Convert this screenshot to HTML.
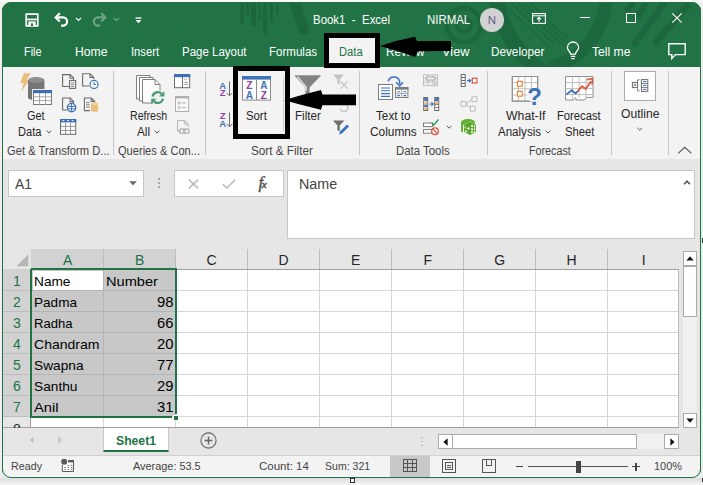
<!DOCTYPE html>
<html lang="en">
<head>
<meta charset="utf-8">
<title>Book1 - Excel</title>
<style>
html,body{margin:0;padding:0}
body{width:703px;height:485px;position:relative;overflow:hidden;background:#eeeeee;font-family:"Liberation Sans",Arial,sans-serif;}
.a{position:absolute}
.t{position:absolute;line-height:20px;height:20px;white-space:nowrap;transform-origin:0 50%}
svg{position:absolute;overflow:visible}
.sep{position:absolute;width:1px;background:#c6c6c6;top:71px;height:84px}
.box{position:absolute;background:#fff;border:1px solid #c6c6c6;box-sizing:border-box}
.sb{position:absolute;background:#fff;border:1px solid #ababab;box-sizing:border-box}
</style>
</head>
<body>
<!-- window -->
<div class="a" style="left:2px;top:2px;width:699px;height:476px;border-radius:9px 9px 9px 9px;overflow:hidden;background:#217346">
  <!-- everything inside is positioned relative to (2,2); use wrapper shifting back -->
  <div class="a" style="left:-2px;top:-2px;width:703px;height:485px">

  <!-- title decorative pattern -->
  <svg style="left:0;top:0" width="703" height="67" viewBox="0 0 703 67">
    <g fill="#1c673d">
      <rect x="240" y="0" width="4" height="24"/><rect x="246" y="0" width="3" height="16"/>
      <rect x="251" y="0" width="5" height="26"/><rect x="258" y="0" width="3" height="20"/>
      <rect x="263" y="0" width="4" height="34"/><rect x="270" y="0" width="3" height="22"/>
      <rect x="276" y="0" width="3" height="14"/>
      <path d="M288 0 L300 0 L310 34 L300 34 Z"/>
    </g>
    <g fill="none" stroke="#1c673d">
      <circle cx="464" cy="25" r="17" stroke-width="4.5"/>
      <circle cx="464" cy="25" r="7" stroke-width="3.5"/>
      <path d="M496 -15 A104 104 0 0 0 600 89" stroke-width="15"/>
      <path d="M606 2 A75 75 0 0 1 549 68" stroke-width="13"/>
      <path d="M506 6 L548 46 M512 4 L554 44 M518 3 L560 43 M524 3 L564 41 M530 3 L568 39" stroke-width="1.2"/>
      <path d="M634 2 L626 12 M647 2 L637 17 M665 2 L633 46 M689 4 L654 44" stroke-width="6.5"/>
    </g>
  </svg>

  <!-- ribbon -->
  <div class="a" style="left:3px;top:67px;width:697px;height:91.5px;background:#f3f3f3"></div>
  <!-- formula area -->
  <div class="a" style="left:3px;top:158.5px;width:697px;height:297px;background:#e6e6e6"></div>
  <!-- status bar -->
  <div class="a" style="left:3px;top:455.5px;width:697px;height:22px;background:#f3f3f3"></div>

  <!-- ===== Data tab highlight ===== -->
  <div class="a" style="left:324px;top:33px;width:55.5px;height:35px;background:#000"></div>
  <div class="a" style="left:329px;top:38px;width:45.5px;height:25px;background:#f3f3f3"></div>

  <!-- ===== Quick access icons ===== -->
  <svg style="left:25px;top:13px" width="14" height="14" viewBox="0 0 14 14">
    <path d="M1.2 1.2 H12.8 V12.8 H1.2 Z" fill="none" stroke="#fff" stroke-width="1.7" stroke-linejoin="round"/>
    <rect x="1.8" y="5.6" width="10.4" height="1.7" fill="#fff"/>
    <rect x="3.3" y="8.4" width="7.4" height="4.6" fill="#fff"/>
    <rect x="5.9" y="10.4" width="2.2" height="2.6" fill="#217346"/>
  </svg>
  <svg style="left:54px;top:12px" width="15" height="15" viewBox="0 0 15 15">
    <path d="M5.8 1.2 L1.6 5.4 L5.8 9.6 M2 5.4 H9 A4.1 4.1 0 0 1 9 13.6 H7" fill="none" stroke="#fff" stroke-width="2.1"/>
  </svg>
  <svg style="left:75px;top:17px" width="7" height="5" viewBox="0 0 7 5"><path d="M1 1 L3.5 3.5 L6 1" fill="none" stroke="#fff" stroke-width="1.1"/></svg>
  <svg style="left:92px;top:12px" width="15" height="15" viewBox="0 0 15 15" opacity="0.35">
    <path d="M9.2 1.2 L13.4 5.4 L9.2 9.6 M13 5.4 H6 A4.1 4.1 0 0 0 6 13.6 H8" fill="none" stroke="#fff" stroke-width="2.1"/>
  </svg>
  <svg style="left:113px;top:17px" width="7" height="5" viewBox="0 0 7 5" opacity="0.35"><path d="M1 1 L3.5 3.5 L6 1" fill="none" stroke="#fff" stroke-width="1.1"/></svg>
  <svg style="left:135px;top:16.5px" width="7" height="7" viewBox="0 0 7 7"><rect x="0.5" y="0.4" width="6" height="1.3" fill="#fff"/><path d="M0.5 3 H6.5 L3.5 6.2 Z" fill="#fff"/></svg>

  <!-- avatar -->
  <div class="a" style="left:480px;top:8px;width:24px;height:24px;border-radius:12px;background:#d2d2d2"></div>

  <!-- window controls -->
  <svg style="left:532px;top:12.5px" width="14" height="11" viewBox="0 0 14 11">
    <rect x="0.6" y="0.6" width="12.8" height="9.8" fill="none" stroke="#fff" stroke-width="1.1"/>
    <path d="M0.6 2.8 H13.4" stroke="#fff" stroke-width="1"/>
    <path d="M7 9 V4.6 M5 6.4 L7 4.4 L9 6.4" fill="none" stroke="#fff" stroke-width="1.1"/>
  </svg>
  <div class="a" style="left:580px;top:17px;width:10px;height:1.3px;background:#fff"></div>
  <div class="a" style="left:626px;top:13px;width:10px;height:10px;border:1.2px solid #fff;box-sizing:border-box"></div>
  <svg style="left:672px;top:13px" width="10" height="10" viewBox="0 0 10 10"><path d="M0.3 0.3 L9.7 9.7 M9.7 0.3 L0.3 9.7" stroke="#fff" stroke-width="1.2"/></svg>

  <!-- lightbulb -->
  <svg style="left:566px;top:42px" width="14" height="18" viewBox="0 0 14 18">
    <path d="M4.6 12.2 C4.6 9.6 1.4 8.6 1.4 5.6 A5.2 5.2 0 0 1 12.6 5.6 C12.6 8.6 9.4 9.6 9.4 12.2 Z" fill="none" stroke="#fff" stroke-width="1.3"/>
    <path d="M4.8 14.4 H9.2 M5.4 16.6 H8.6" stroke="#fff" stroke-width="1.3"/>
  </svg>
  <!-- comment -->
  <svg style="left:668px;top:43px" width="18" height="17" viewBox="0 0 18 17">
    <path d="M0.8 0.8 H17.2 V11.6 H7.4 L3.8 15.4 V11.6 H0.8 Z" fill="none" stroke="#fff" stroke-width="1.4" stroke-linejoin="miter"/>
  </svg>

    <!-- ribbon group separators -->
  <div class="sep" style="left:113px"></div>
  <div class="sep" style="left:205px"></div>
  <div class="sep" style="left:358.5px"></div>
  <div class="sep" style="left:487px"></div>
  <div class="sep" style="left:611px"></div>
  <div class="sep" style="left:668px"></div>
  <!-- Sort highlight box -->
  <div class="a" style="left:233px;top:66.3px;width:56.5px;height:72.4px;box-sizing:border-box;border:5.2px solid #000"></div>
  <div class="a" style="left:282.5px;top:77px;width:1px;height:54px;background:#cfcfcf"></div>
  <!-- outline box -->
  <div class="a" style="left:624px;top:71.4px;width:32px;height:30px;box-sizing:border-box;background:#fff;border:1px solid #ababab"></div>

  <svg style="left:0;top:0" width="703" height="485" viewBox="0 0 703 485">
  <!-- ===== Get Data ===== -->
  <g>
    <path d="M24 73.2 L30.8 73.2 L26.6 80 L29.6 80 L21 91.8 L23.6 83 L20 83 Z" fill="#eabf7c"/>
    <path d="M28 80 V97.5 A8.2 3 0 0 0 44.4 97.5 V80 Z" fill="#757575"/>
    <ellipse cx="36.2" cy="80" rx="8.2" ry="3" fill="#8f8f8f"/>
    <rect x="32.6" y="89.6" width="19.6" height="15.4" fill="#fff" stroke="#f3f3f3" stroke-width="1"/>
    <rect x="33.5" y="90.5" width="18" height="14" fill="#fff" stroke="#7a7a7a" stroke-width="1"/>
    <rect x="33" y="90" width="19" height="3.2" fill="#3b6fb6"/>
    <path d="M33.5 96.8 H51.5 M33.5 100.6 H51.5 M39.5 93 V104.5 M45.5 93 V104.5" stroke="#9a9a9a" stroke-width="0.9" fill="none"/>
  </g>
  <!-- small: from text -->
  <g fill="none" stroke="#6b6b6b" stroke-width="1.1">
    <path d="M69 86.5 H62.6 V74.6 H70.2 L73.6 78 V80"/>
    <path d="M70 74.8 V78.2 H73.4"/>
    <rect x="69.6" y="80.6" width="6" height="7.8" fill="#fff"/>
    <path d="M71 83 H74.4 M71 84.8 H74.4 M71 86.6 H74.4" stroke-width="0.8"/>
  </g>
  <!-- small: recent sources (doc + clock) -->
  <g fill="none" stroke="#6b6b6b" stroke-width="1.1">
    <path d="M89 86 H82.6 V73.8 H90.2 L93.6 77.2 V79"/>
    <path d="M90 74 V77.4 H93.4"/>
    <circle cx="94" cy="84.4" r="4" stroke="#3b6fb6" stroke-width="1.2" fill="#fff"/>
    <path d="M94 82 V84.6 H96.2" stroke="#3b6fb6" stroke-width="1"/>
  </g>
  <!-- small: from web -->
  <g fill="none" stroke="#6b6b6b" stroke-width="1.1">
    <path d="M67 110 H62.6 V98 H70.2 L73.6 101.4 V103"/>
    <path d="M70 98.2 V101.6 H73.4"/>
    <circle cx="71.6" cy="107.6" r="4.2" stroke="#3b6fb6" stroke-width="1.3" fill="#fff"/>
    <path d="M67.6 106.4 H75.6 M67.6 108.9 H75.6 M71.6 103.6 V111.6" stroke="#3b6fb6" stroke-width="1"/>
  </g>
  <!-- small: existing connections -->
  <g fill="none" stroke="#6b6b6b" stroke-width="1.1">
    <path d="M90 110.6 H84.4 V98 H91.4 L94.6 101.2 V103"/>
    <path d="M91.2 98.2 V101.4 H94.4"/>
    <path d="M86.2 102.6 H89.6 M86.2 104.8 H89.6 M86.2 107 H89.6" stroke-width="0.9"/>
    <path d="M91 103.8 V110.2 A3.6 1.6 0 0 0 98.2 110.2 V103.8 Z" fill="#eabf7c" stroke="none"/>
    <ellipse cx="94.6" cy="103.8" rx="3.6" ry="1.6" fill="#f0cf98" stroke="none"/>
  </g>
  <!-- small: from table -->
  <g>
    <rect x="60.5" y="119.5" width="15.2" height="14.8" fill="#fff" stroke="#6b6b6b" stroke-width="1"/>
    <rect x="60" y="119" width="16.2" height="3.4" fill="#3b6fb6"/>
    <path d="M62.4 120.6 H64.4 M67 120.6 H69 M71.6 120.6 H73.6" stroke="#fff" stroke-width="0.9"/>
    <path d="M60.5 126.4 H75.7 M60.5 130.4 H75.7 M65.6 122.4 V134.3 M70.6 122.4 V134.3" stroke="#8a8a8a" stroke-width="0.9" fill="none"/>
  </g>

  <!-- ===== Refresh All ===== -->
  <g fill="#fff" stroke="#7d7d7d" stroke-width="1">
    <path d="M136.5 75.5 H150 V99 H136.5 Z"/>
    <path d="M139.5 77.5 H153 V101 H139.5 Z"/>
    <path d="M142.5 79.5 H155 L160 84.5 V103 H142.5 Z"/>
    <path d="M155 79.7 V84.5 H159.8" fill="none"/>
  </g>
  <circle cx="157.8" cy="97.6" r="7.6" fill="#f3f3f3"/>
  <g fill="none" stroke="#4a9b74" stroke-width="2.3">
    <path d="M152.6 96.6 A5.3 5.3 0 0 1 161.6 93.8"/>
    <path d="M163 98.6 A5.3 5.3 0 0 1 154 101.4"/>
  </g>
  <path d="M164.4 91 V96.4 H159 Z" fill="#4a9b74"/>
  <path d="M151.2 104.2 V98.8 H156.6 Z" fill="#4a9b74"/>
  <!-- small: queries & connections -->
  <g>
    <rect x="174.5" y="74.5" width="15.2" height="13.2" fill="#fff" stroke="#6b6b6b" stroke-width="1"/>
    <rect x="174" y="74" width="16.2" height="3.2" fill="#3b6fb6"/>
    <path d="M182.5 77 V87.5" stroke="#6b6b6b" stroke-width="1"/>
    <path d="M182 79.2 H188.5" stroke="#8a8a8a" stroke-width="0.9" stroke-dasharray="1 1"/>
    <path d="M184.4 82.4 H188 M184.4 84.6 H188" stroke="#8a8a8a" stroke-width="0.9"/>
  </g>
  <!-- small: properties (disabled) -->
  <g fill="none" stroke="#b4adb4" stroke-width="1">
    <rect x="175.5" y="96.5" width="13.2" height="15" fill="#f8f8f8"/>
    <rect x="175" y="96" width="14.2" height="2.4" fill="#b4adb4" stroke="none"/>
    <circle cx="179.2" cy="103" r="1.1"/><circle cx="179.2" cy="107.6" r="1.1"/>
    <path d="M181.8 103 H186 M181.8 107.6 H186"/>
  </g>
  <!-- small: edit links (disabled) -->
  <g fill="none" stroke="#b9b4b9" stroke-width="1">
    <path d="M181 131 H177.5 V120.5 H184.6 L188.2 124 V127"/>
    <path d="M184.4 120.7 V124.2 H188"/>
    <rect x="179.4" y="129" width="5.6" height="4.4" rx="2.2" stroke-width="1.3"/>
    <rect x="183.6" y="129" width="5.6" height="4.4" rx="2.2" stroke-width="1.3"/>
  </g>

  <!-- ===== Sort & Filter ===== -->
  <g font-family="Liberation Sans, Arial, sans-serif" font-weight="bold" font-size="9.5" text-anchor="middle">
    <text x="222.6" y="88.6" fill="#3f74b8">A</text>
    <text x="222.6" y="96.4" fill="#8b44a8">Z</text>
    <text x="222.6" y="119.4" fill="#8b44a8">Z</text>
    <text x="222.6" y="127.2" fill="#3f74b8">A</text>
  </g>
  <g fill="none" stroke="#6b6b6b" stroke-width="1">
    <path d="M229.5 81.5 V95.6 M226.6 92.8 L229.5 95.8 L232.4 92.8"/>
    <path d="M229.5 112.5 V126.6 M226.6 123.8 L229.5 126.8 L232.4 123.8"/>
  </g>
  <!-- big sort icon -->
  <rect x="242.5" y="76.5" width="28" height="23.6" fill="#fff" stroke="#8a8a8a" stroke-width="1"/>
  <rect x="242" y="76" width="29" height="3.6" fill="#3f74b8"/>
  <path d="M256.5 79.6 V100" stroke="#8a8a8a" stroke-width="1"/>
  <g font-family="Liberation Sans, Arial, sans-serif" font-weight="bold" font-size="10" text-anchor="middle">
    <text x="249.4" y="89.4" fill="#8b44a8">Z</text>
    <text x="249.4" y="98.6" fill="#3f74b8">A</text>
    <text x="263.8" y="89.4" fill="#3f74b8">A</text>
    <text x="263.8" y="98.6" fill="#8b44a8">Z</text>
  </g>
  <!-- filter funnel -->
  <path d="M294.2 75.2 H321.2 L309.6 87.6 V101 L305.4 98.6 V87.6 Z" fill="#828282"/>
  <path d="M297.4 76.6 L306.3 87.2 V91" fill="none" stroke="#f3f3f3" stroke-width="1.1"/>
  <!-- clear (disabled) -->
  <path d="M333 74.4 H344 L339.6 79.4 V84.4 L337.4 83.2 V79.4 Z" fill="#c2c2c2"/>
  <path d="M340.6 81.4 L347.6 88.6 M347.6 81.4 L340.6 88.6" stroke="#c2c2c2" stroke-width="1.3"/>
  <!-- reapply (disabled) -->
  <path d="M340 108.4 A4 4 0 1 0 347 105" fill="none" stroke="#c2c2c2" stroke-width="1.4"/>
  <!-- advanced -->
  <path d="M333 120.4 H344.4 L339.8 125.6 V131.6 L337.4 130 V125.6 Z" fill="#6f6f6f"/>
  <path d="M347 124.6 L349 126.6 L342 133.6 L339.2 134.6 L340 131.6 Z" fill="#3b73c4"/>

  <!-- ===== Text to columns ===== -->
  <rect x="378.5" y="84.5" width="14" height="15" fill="#fff" stroke="#7d7d7d" stroke-width="1"/>
  <path d="M381 88 H390 M381 90.8 H390 M381 93.6 H390 M381 96.4 H390" stroke="#3b73c4" stroke-width="1.1"/>
  <rect x="395.5" y="87.5" width="12.4" height="10" fill="#fff" stroke="#7d7d7d" stroke-width="1"/>
  <rect x="395" y="87" width="13.4" height="2.6" fill="#7d7d7d"/>
  <path d="M401.7 89.6 V97.5 M395.5 93.6 H408" stroke="#9a9a9a" stroke-width="0.9"/>
  <path d="M397.2 91.7 H400 M403.4 91.7 H406.2 M397.2 95.6 H400 M403.4 95.6 H406.2" stroke="#3b73c4" stroke-width="1.1"/>
  <path d="M388.2 81.4 A6 6 0 0 1 399.6 81 V84" fill="none" stroke="#3b73c4" stroke-width="1.5"/>
  <path d="M396.2 82.2 L399.6 85.8 L403 82.2" fill="none" stroke="#3b73c4" stroke-width="1.5"/>
  <!-- flash fill (disabled) -->
  <g fill="none" stroke="#c4bfc4" stroke-width="1">
    <rect x="423.5" y="74.8" width="14" height="10.8"/>
    <path d="M423.5 78.4 H437.5 M423.5 82 H437.5 M428 74.8 V85.6 M433 74.8 V85.6"/>
    <rect x="426.4" y="77" width="8.6" height="3" stroke="#aaa4aa" fill="#f3f3f3"/>
    <path d="M436.4 80.6 L432.4 85 H434.8 L433 88.4 L438 83.4 H435.6 L437.6 80.6 Z" fill="#cfcfcf" stroke="none"/>
  </g>
  <!-- remove duplicates -->
  <g stroke="#6b6b6b" stroke-width="1">
    <rect x="423.7" y="97.5" width="4" height="13" fill="#fff"/>
    <rect x="434.7" y="97.5" width="4" height="13" fill="#fff"/>
  </g>
  <rect x="424.2" y="98" width="3" height="3" fill="#3b73c4"/>
  <rect x="424.2" y="101.4" width="3" height="2.8" fill="#eabf7c"/>
  <rect x="424.2" y="104.6" width="3" height="2.6" fill="#3b73c4"/>
  <rect x="424.2" y="107.4" width="3" height="2.6" fill="#eabf7c"/>
  <rect x="435.2" y="98" width="3" height="3" fill="#3b73c4"/>
  <rect x="435.2" y="101.4" width="3" height="2.8" fill="#eabf7c"/>
  <path d="M435 104.4 H438.5 M435 107.4 H438.5" stroke="#6b6b6b" stroke-width="0.9"/>
  <path d="M429.4 104 H433 M431.4 102.2 L433.2 104 L431.4 105.8" fill="none" stroke="#3b73c4" stroke-width="1.1"/>
  <!-- data validation -->
  <g fill="#fff" stroke="#7d7d7d" stroke-width="1">
    <rect x="423.5" y="123" width="9" height="3.6"/>
    <rect x="423.5" y="129.6" width="9" height="3.6"/>
  </g>
  <path d="M431.6 122.6 L433.8 125 L438.4 119.6" fill="none" stroke="#3f9b63" stroke-width="1.5"/>
  <circle cx="435" cy="131.2" r="3.3" fill="#fff" stroke="#d9533a" stroke-width="1.3"/>
  <path d="M432.8 129 L437.2 133.4" stroke="#d9533a" stroke-width="1.2"/>
  <path d="M446.8 125.8 L449.2 128.2 L451.6 125.8" fill="none" stroke="#555" stroke-width="1"/>
  <!-- consolidate -->
  <g fill="#fff" stroke="#6b6b6b" stroke-width="1">
    <rect x="461.2" y="74.5" width="4" height="12"/>
    <path d="M461.2 77.5 H465.2 M461.2 80.5 H465.2 M461.2 83.5 H465.2"/>
  </g>
  <path d="M467 80.6 H470.6 M469 78.8 L470.8 80.6 L469 82.4" fill="none" stroke="#3b73c4" stroke-width="1.1"/>
  <rect x="472.3" y="78.2" width="4.6" height="4.8" fill="#fff" stroke="#d9533a" stroke-width="1.2"/>
  <!-- relationships (disabled) -->
  <g fill="#f6f6f6" stroke="#bdb8bd" stroke-width="1">
    <path d="M466 103.8 L472 99.4 M466 103.8 L470.4 108.6" fill="none"/>
    <rect x="461.2" y="101.4" width="4.8" height="4.8"/>
    <rect x="472" y="96.8" width="4.8" height="4.8"/>
    <rect x="470.4" y="106.2" width="4.8" height="4.8"/>
  </g>
  <!-- data model (green) -->
  <path d="M461 122.6 C461 120.2 464.6 119 468 119 C471.6 119 475 120.2 475 122.6 V124 L470 121.6 L463 125 V132.6 C461.8 132.2 461 131.6 461 130.6 Z" fill="#62b12f"/>
  <path d="M464 124.8 L470 121.8 L476 124.8 V132 L470 135 L464 132 Z" fill="#5aa82b"/>
  <g fill="#fff">
    <rect x="471.2" y="124.8" width="1.6" height="2.2"/><rect x="473.8" y="125.4" width="1.3" height="2"/>
    <rect x="471.2" y="128.2" width="1.6" height="2"/><rect x="473.8" y="128.4" width="1.3" height="1.8"/>
    <rect x="471.2" y="131.2" width="1.6" height="1.8"/><rect x="473.8" y="131" width="1.3" height="1.6"/>
  </g>
  <path d="M468.4 127 V130 M467 128.5 H469.8 M466 130.2 V132.6 M464.8 131.4 H467.2 M465.2 126 V128.4" stroke="#fff" stroke-width="0.8" fill="none"/>
  <!-- ===== What-If ===== -->
  <g fill="#fff" stroke="#8f8f8f" stroke-width="1">
    <rect x="512.3" y="76.5" width="25.4" height="24.6"/>
    <path d="M512.3 82.6 H537.7 M512.3 88.8 H537.7 M512.3 95 H537.7 M518.6 76.5 V101 M525 76.5 V101 M531.4 76.5 V101" stroke="#bdbdbd" fill="none"/>
    <rect x="512.3" y="76.5" width="25.4" height="24.6" fill="none"/>
  </g>
  <rect x="517.4" y="81.4" width="4.8" height="4.8" fill="#fff" stroke="#e8873a" stroke-width="1.2"/>
  <rect x="517.4" y="91.4" width="4.8" height="4.8" fill="#fff" stroke="#e8873a" stroke-width="1.2"/>
  <circle cx="534.4" cy="95.5" r="7.2" fill="#f3f3f3"/>
  <text x="534.6" y="104.6" font-family="Liberation Sans, Arial, sans-serif" font-weight="bold" font-size="24" text-anchor="middle" fill="#3b73b8">?</text>

  <!-- ===== Forecast sheet ===== -->
  <path d="M565.5 76.5 H593 V97.4 H586.4 L584.6 100 H576.6 L575.4 97.6 L574 100 H565.5 Z" fill="#fff" stroke="#8f8f8f" stroke-width="1"/>
  <path d="M565.5 82.6 H593 M565.5 88.6 H593 M565.5 94.6 H593 M572.4 76.5 V100 M579.2 76.5 V97.5 M586 76.5 V97.5" stroke="#bdbdbd" stroke-width="1" fill="none"/>
  <path d="M566.4 94.6 L571.6 90.2 L575.6 93.4 L578 90.8" fill="none" stroke="#3b73b8" stroke-width="1.8"/>
  <path d="M577.6 91.2 L582 86.2 L585.6 89 L591 81.4" fill="none" stroke="#d9593a" stroke-width="1.8"/>
  <path d="M586.8 79.6 L592.4 78.8 L592 84.6" fill="none" stroke="#d9593a" stroke-width="1.6"/>

  <!-- ===== Outline icon ===== -->
  <g fill="none" stroke="#6b6b6b" stroke-width="1">
    <rect x="632.4" y="82.4" width="5.2" height="5.2" fill="#fff"/>
    <path d="M633.6 85 H636.4 M635 83.6 V86.4" stroke-width="0.9"/>
    <path d="M639.6 79.8 H637.6 V82 M637.6 88.4 V90.8 H639.6" stroke-width="0.9"/>
    <rect x="641.4" y="79.6" width="6.4" height="11.8" fill="#fff"/>
    <path d="M641.4 83.4 H647.8 M641.4 87.4 H647.8" stroke-width="0.9"/>
    <path d="M643 81.6 H646.4 M643 85.4 H646.4 M643 89.4 H646.4" stroke="#3b73c4" stroke-width="1"/>
  </g>

  <!-- chevrons -->
  <g fill="none" stroke="#555" stroke-width="1">
    <path d="M46.6 130.6 L49 133 L51.4 130.6"/>
    <path d="M154.6 130.6 L157 133 L159.4 130.6"/>
    <path d="M545.6 130.6 L548 133 L550.4 130.6"/>
    <path d="M637.4 127.8 L639.8 130.2 L642.2 127.8"/>
    <path d="M678.2 153.4 L684.8 147.2 L691.4 153.4" stroke-width="1.2"/>
  </g>
  </svg>


  <!-- ===== formula bar ===== -->
  <div class="box" style="left:8px;top:170px;width:136px;height:27px"></div>
  <svg style="left:129px;top:181px" width="8" height="5" viewBox="0 0 8 5"><path d="M0.2 0.3 H7.8 L4 4.6 Z" fill="#6a6a6a"/></svg>
  <div class="a" style="left:158px;top:178px;width:2px;height:2px;background:#a6a6a6;box-shadow:0 4px 0 #a6a6a6,0 8px 0 #a6a6a6"></div>
  <div class="box" style="left:174px;top:170px;width:110px;height:27px"></div>
  <svg style="left:187.5px;top:178.5px" width="11" height="10" viewBox="0 0 11 10"><path d="M0.8 0.6 L10.2 9.4 M10.2 0.6 L0.8 9.4" stroke="#bcbcbc" stroke-width="1.5"/></svg>
  <svg style="left:221.5px;top:178.5px" width="14" height="10" viewBox="0 0 14 10"><path d="M0.8 5.4 L4.8 9 L13.2 0.8" fill="none" stroke="#bcbcbc" stroke-width="1.6"/></svg>
  <span class="t" style="left:258.5px;top:172.5px;font-family:'Liberation Serif',serif;font-style:italic;font-size:17px;color:#4a4a4a;-webkit-text-stroke:0.35px #4a4a4a;letter-spacing:-1.5px">f<span style="font-size:11px">x</span></span>
  <div class="box" style="left:287px;top:170px;width:408px;height:69px"></div>
  <svg style="left:683px;top:179.5px" width="8" height="5" viewBox="0 0 8 5"><path d="M1 4.2 L4 1.2 L7 4.2" fill="none" stroke="#555" stroke-width="1.6"/></svg>

  <!-- ===== grid ===== -->
  <!-- column headers -->
  <div class="a" style="left:31px;top:249px;width:144.5px;height:20px;background:#d2d2d2"></div>
  <div class="a" style="left:3px;top:269px;width:28px;height:148px;background:#d2d2d2"></div>
  <!-- select-all triangle -->
  <svg style="left:15.5px;top:253.5px" width="12.5" height="12.5" viewBox="0 0 12.5 12.5"><path d="M12.3 0.3 V12.3 H0.3 Z" fill="#b7b7b7"/></svg>
  <!-- white grid -->
  <div class="a" style="left:31px;top:269px;width:648px;height:158.5px;background:#fff"></div>
  <!-- selection fill -->
  <div class="a" style="left:31px;top:269px;width:144.5px;height:148px;background:#c8c8c8"></div>
  <div class="a" style="left:33px;top:271px;width:70px;height:19px;background:#fff"></div>
  <!-- grid lines -->
  <svg style="left:0;top:0" width="703" height="485" viewBox="0 0 703 485" shape-rendering="crispEdges">
    <g stroke="#d6d6d6" stroke-width="1">
      <path d="M31 290.5 H679 M31 311.5 H679 M31 332.5 H679 M31 353.5 H679 M31 374.5 H679 M31 395.5 H679 M31 416.5 H679"/>
      <path d="M103.5 269 V427.5 M175.5 269 V427.5 M247.5 269 V427.5 M319.5 269 V427.5 M391.5 269 V427.5 M463.5 269 V427.5 M535.5 269 V427.5 M607.5 269 V427.5"/>
    </g>
    <!-- darker lines inside selection -->
    <g stroke="#b4b4b4" stroke-width="1">
      <path d="M31 290.5 H175 M31 311.5 H175 M31 332.5 H175 M31 353.5 H175 M31 374.5 H175 M31 395.5 H175"/>
      <path d="M103.5 269 V417"/>
    </g>
    <!-- header separators -->
    <g stroke="#bdbdbd" stroke-width="1">
      <path d="M103.5 249 V269 M175.5 249 V269 M247.5 249 V269 M319.5 249 V269 M391.5 249 V269 M463.5 249 V269 M535.5 249 V269 M607.5 249 V269 M678.5 269 V427.5"/>
      <path d="M3 290.5 H31 M3 311.5 H31 M3 332.5 H31 M3 353.5 H31 M3 374.5 H31 M3 395.5 H31 M3 416.5 H31"/>
    </g>
    <g stroke="#9f9f9f" stroke-width="1">
      <path d="M175 269.5 H679 M30.5 417 V427.5 M3 427.5 H679"/>
    </g>
    <!-- selection border -->
    <g fill="none" stroke="#217346" stroke-width="2">
      <path d="M31 269 H176 V414 M172 417 H31 V269"/>
    </g>
    <rect x="173" y="415" width="5" height="5" fill="#217346" stroke="#fff" stroke-width="1"/>
  </svg>

  <!-- vertical scrollbar -->
  <div class="a" style="left:683px;top:266px;width:13.5px;height:147px;background:#f0f0f0"></div>
  <div class="sb" style="left:683px;top:251px;width:13.5px;height:14.5px"></div>
  <svg style="left:686px;top:256px" width="8" height="5" viewBox="0 0 8 5"><path d="M4 0.3 L7.7 4.5 H0.3 Z" fill="#111"/></svg>
  <div class="sb" style="left:683px;top:266px;width:13.5px;height:51px"></div>
  <div class="sb" style="left:683px;top:413px;width:13.5px;height:14.5px"></div>
  <svg style="left:686px;top:418px" width="8" height="5" viewBox="0 0 8 5"><path d="M4 4.7 L7.7 0.5 H0.3 Z" fill="#111"/></svg>

  <span class="t" style="left:13.1px;top:418.5px;font-size:14px;color:#262626">8</span>
  <div class="a" style="left:3px;top:428px;width:697px;height:27.5px;background:#e6e6e6"></div>
  <!-- sheet tab bar -->
  <svg style="left:29px;top:436px" width="5" height="8" viewBox="0 0 5 8"><path d="M4.6 0.4 V7.6 L0.6 4 Z" fill="#c3c3c3"/></svg>
  <svg style="left:58px;top:436px" width="5" height="8" viewBox="0 0 5 8"><path d="M0.4 0.4 V7.6 L4.4 4 Z" fill="#c3c3c3"/></svg>
  <div class="a" style="left:103px;top:428px;width:63.5px;height:21.5px;background:#fff;border-left:1px solid #c9c9c9;border-right:1px solid #c9c9c9;border-bottom:2px solid #217346"></div>
  <svg style="left:199.5px;top:431.5px" width="17" height="17" viewBox="0 0 17 17"><circle cx="8.5" cy="8.5" r="7.6" fill="none" stroke="#666" stroke-width="1.1"/><path d="M8.5 4.6 V12.4 M4.6 8.5 H12.4" stroke="#666" stroke-width="1.4"/></svg>
  <div class="a" style="left:421px;top:436.5px;width:1.6px;height:1.6px;background:#b5b5b5;box-shadow:0 4px 0 #b5b5b5,0 8px 0 #b5b5b5"></div>
  <!-- horizontal scrollbar -->
  <div class="a" style="left:453px;top:434px;width:211px;height:15px;background:#f0f0f0"></div>
  <div class="sb" style="left:438px;top:434px;width:15px;height:15px"></div>
  <svg style="left:443px;top:437.5px" width="5" height="8" viewBox="0 0 5 8"><path d="M4.6 0.2 V7.8 L0.4 4 Z" fill="#111"/></svg>
  <div class="sb" style="left:452px;top:434px;width:184.5px;height:15px"></div>
  <div class="sb" style="left:664px;top:434px;width:15px;height:15px"></div>
  <svg style="left:669.5px;top:437.5px" width="5" height="8" viewBox="0 0 5 8"><path d="M0.4 0.2 V7.8 L4.6 4 Z" fill="#111"/></svg>

  <!-- status bar -->
  <div class="a" style="left:3px;top:455px;width:697px;height:1px;background:#d2d2d2"></div>
  <div class="a" style="left:3px;top:476px;width:697px;height:1px;background:#fafafa"></div>
  <svg style="left:61px;top:458px" width="14" height="15" viewBox="0 0 14 15">
    <path d="M1.3 7 V13.5 H12.5 V2.6 H7" fill="#fff" stroke="#5a5a5a" stroke-width="1"/>
    <rect x="7" y="2" width="6" height="2.4" fill="#5a5a5a"/>
    <circle cx="3.2" cy="3.8" r="3" fill="#5a5a5a"/>
    <path d="M6.6 7.4 H8.2 M9.8 7.4 H11.4 M3.4 9.4 H5 M6.6 9.4 H8.2 M9.8 9.4 H11.4 M3.4 11.4 H5 M6.6 11.4 H8.2 M9.8 11.4 H11.4" stroke="#5a5a5a" stroke-width="0.9"/>
  </svg>
  <div class="a" style="left:389.5px;top:455.5px;width:40px;height:22px;background:#c8c8c8"></div>
  <svg style="left:403px;top:459px" width="14" height="13" viewBox="0 0 14 13" shape-rendering="crispEdges"><path d="M0.5 0.5 H13.5 V12.5 H0.5 Z M0.5 4.5 H13.5 M0.5 8.5 H13.5 M4.5 0.5 V12.5 M9.5 0.5 V12.5" fill="none" stroke="#555" stroke-width="1"/></svg>
  <svg style="left:442px;top:459px" width="14" height="14" viewBox="0 0 14 14" shape-rendering="crispEdges"><rect x="0.5" y="0.5" width="13" height="13" fill="none" stroke="#555"/><rect x="3.5" y="3.5" width="7" height="7" fill="none" stroke="#555"/><path d="M5 6.5 H9 M5 8.5 H9" stroke="#555"/></svg>
  <svg style="left:482px;top:458.5px" width="14" height="14" viewBox="0 0 14 14" shape-rendering="crispEdges"><rect x="0.5" y="0.5" width="13" height="13" fill="none" stroke="#555"/><path d="M4.5 0.5 V6.5 H9.5 V0.5" fill="none" stroke="#555"/></svg>
  <div class="a" style="left:516px;top:466px;width:7px;height:1.2px;background:#444"></div>
  <div class="a" style="left:528px;top:466.2px;width:100px;height:1px;background:#555"></div>
  <div class="a" style="left:576px;top:460.5px;width:4.5px;height:12px;background:#444"></div>
  <div class="a" style="left:632px;top:466px;width:8px;height:1.2px;background:#444"></div>
  <div class="a" style="left:635.4px;top:462.5px;width:1.2px;height:8px;background:#444"></div>


<span class="t"  style="left:313.0px;top:10.0px;font-size:12px;color:#ffffff;transform:scaleX(0.954);white-space:pre;">Book1  -  Excel</span>
<span class="t"  style="left:427.4px;top:10.0px;font-size:12px;color:#ffffff;transform:scaleX(0.953);">NIRMAL</span>
<span class="t"  style="left:487.8px;top:10.0px;font-size:11.5px;color:#675d84;transform:scaleX(1.000);">N</span>
<span class="t"  style="left:23.5px;top:41.5px;font-size:12px;color:#ffffff;transform:scaleX(0.905);">File</span>
<span class="t"  style="left:74.5px;top:41.5px;font-size:12px;color:#ffffff;transform:scaleX(1.015);">Home</span>
<span class="t"  style="left:130.6px;top:41.5px;font-size:12px;color:#ffffff;transform:scaleX(0.936);">Insert</span>
<span class="t"  style="left:181.5px;top:41.5px;font-size:12px;color:#ffffff;transform:scaleX(0.957);">Page Layout</span>
<span class="t"  style="left:268.6px;top:41.5px;font-size:12px;color:#ffffff;transform:scaleX(0.962);">Formulas</span>
<span class="t"  style="left:339.3px;top:41.5px;font-size:12px;color:#217346;transform:scaleX(0.931);">Data</span>
<span class="t"  style="left:386.0px;top:41.5px;font-size:12px;color:#ffffff;transform:scaleX(0.978);">Review</span>
<span class="t"  style="left:441.5px;top:41.5px;font-size:12px;color:#ffffff;transform:scaleX(1.066);">View</span>
<span class="t"  style="left:491.0px;top:41.5px;font-size:12px;color:#ffffff;transform:scaleX(0.978);">Developer</span>
<span class="t"  style="left:592.0px;top:41.5px;font-size:12px;color:#ffffff;transform:scaleX(1.013);">Tell me</span>
<span class="t"  style="left:27.4px;top:105.6px;font-size:12px;color:#262626;transform:scaleX(0.910);">Get</span>
<span class="t"  style="left:18.4px;top:122.0px;font-size:12px;color:#262626;transform:scaleX(0.923);">Data</span>
<span class="t"  style="left:6.7px;top:141.0px;font-size:12px;color:#444444;transform:scaleX(0.933);">Get & Transform D...</span>
<span class="t"  style="left:129.8px;top:105.6px;font-size:12px;color:#262626;transform:scaleX(0.885);">Refresh</span>
<span class="t"  style="left:136.5px;top:122.0px;font-size:12px;color:#262626;transform:scaleX(0.974);">All</span>
<span class="t"  style="left:117.7px;top:141.0px;font-size:12px;color:#444444;transform:scaleX(0.924);">Queries & Con...</span>
<span class="t"  style="left:246.0px;top:105.6px;font-size:12px;color:#262626;transform:scaleX(0.945);">Sort</span>
<span class="t"  style="left:295.2px;top:105.6px;font-size:12px;color:#262626;transform:scaleX(0.967);">Filter</span>
<span class="t"  style="left:250.7px;top:141.0px;font-size:12px;color:#444444;transform:scaleX(0.977);">Sort & Filter</span>
<span class="t"  style="left:376.0px;top:105.6px;font-size:12px;color:#262626;transform:scaleX(0.979);">Text to</span>
<span class="t"  style="left:369.8px;top:122.0px;font-size:12px;color:#262626;transform:scaleX(0.988);">Columns</span>
<span class="t"  style="left:396.0px;top:141.0px;font-size:12px;color:#444444;transform:scaleX(0.951);">Data Tools</span>
<span class="t"  style="left:505.5px;top:105.6px;font-size:12px;color:#262626;transform:scaleX(1.021);">What-If</span>
<span class="t"  style="left:498.0px;top:122.0px;font-size:12px;color:#262626;transform:scaleX(0.962);">Analysis</span>
<span class="t"  style="left:557.3px;top:105.6px;font-size:12px;color:#262626;transform:scaleX(0.936);">Forecast</span>
<span class="t"  style="left:565.0px;top:122.0px;font-size:12px;color:#262626;transform:scaleX(0.938);">Sheet</span>
<span class="t"  style="left:528.9px;top:141.0px;font-size:12px;color:#444444;transform:scaleX(0.895);">Forecast</span>
<span class="t"  style="left:620.8px;top:104.0px;font-size:12px;color:#262626;transform:scaleX(1.012);">Outline</span>
<span class="t"  style="left:14.6px;top:174.0px;font-size:14px;color:#444444;transform:scaleX(0.993);">A1</span>
<span class="t"  style="left:298.6px;top:174.0px;font-size:14px;color:#444444;transform:scaleX(1.023);">Name</span>
<span class="t"  style="left:63.0px;top:249.5px;font-size:14px;color:#217346;transform:scaleX(1.000);">A</span>
<span class="t"  style="left:135.0px;top:249.5px;font-size:14px;color:#217346;transform:scaleX(1.000);">B</span>
<span class="t"  style="left:206.6px;top:249.5px;font-size:14px;color:#262626;transform:scaleX(1.000);">C</span>
<span class="t"  style="left:278.6px;top:249.5px;font-size:14px;color:#262626;transform:scaleX(1.000);">D</span>
<span class="t"  style="left:351.0px;top:249.5px;font-size:14px;color:#262626;transform:scaleX(1.000);">E</span>
<span class="t"  style="left:423.4px;top:249.5px;font-size:14px;color:#262626;transform:scaleX(1.000);">F</span>
<span class="t"  style="left:494.3px;top:249.5px;font-size:14px;color:#262626;transform:scaleX(1.000);">G</span>
<span class="t"  style="left:566.6px;top:249.5px;font-size:14px;color:#262626;transform:scaleX(1.000);">H</span>
<span class="t"  style="left:641.8px;top:249.5px;font-size:14px;color:#262626;transform:scaleX(1.000);">I</span>
<span class="t"  style="left:13.1px;top:271.0px;font-size:14px;color:#217346;transform:scaleX(1.000);">1</span>
<span class="t"  style="left:13.1px;top:292.0px;font-size:14px;color:#217346;transform:scaleX(1.000);">2</span>
<span class="t"  style="left:13.1px;top:313.0px;font-size:14px;color:#217346;transform:scaleX(1.000);">3</span>
<span class="t"  style="left:13.1px;top:334.0px;font-size:14px;color:#217346;transform:scaleX(1.000);">4</span>
<span class="t"  style="left:13.1px;top:355.0px;font-size:14px;color:#217346;transform:scaleX(1.000);">5</span>
<span class="t"  style="left:13.1px;top:376.0px;font-size:14px;color:#217346;transform:scaleX(1.000);">6</span>
<span class="t"  style="left:13.1px;top:397.0px;font-size:14px;color:#217346;transform:scaleX(1.000);">7</span>
<span class="t"  style="left:34.3px;top:271.8px;font-size:13.6px;color:#000;transform:scaleX(1.006);">Name</span>
<span class="t"  style="left:34.3px;top:292.8px;font-size:13.6px;color:#000;transform:scaleX(0.998);">Padma</span>
<span class="t"  style="left:34.3px;top:313.8px;font-size:13.6px;color:#000;transform:scaleX(0.961);">Radha</span>
<span class="t"  style="left:34.3px;top:334.8px;font-size:13.6px;color:#000;transform:scaleX(1.032);">Chandram</span>
<span class="t"  style="left:34.3px;top:355.8px;font-size:13.6px;color:#000;transform:scaleX(1.008);">Swapna</span>
<span class="t"  style="left:34.3px;top:376.8px;font-size:13.6px;color:#000;transform:scaleX(1.009);">Santhu</span>
<span class="t"  style="left:34.3px;top:397.8px;font-size:13.6px;color:#000;transform:scaleX(1.081);">Anil</span>
<span class="t"  style="left:106.0px;top:271.8px;font-size:13.6px;color:#000;transform:scaleX(1.075);">Number</span>
<span class="t"  style="left:157.0px;top:292.8px;font-size:13.8px;color:#000;transform:scaleX(1.074);">98</span>
<span class="t"  style="left:157.0px;top:313.8px;font-size:13.8px;color:#000;transform:scaleX(1.074);">66</span>
<span class="t"  style="left:157.0px;top:334.8px;font-size:13.8px;color:#000;transform:scaleX(1.074);">20</span>
<span class="t"  style="left:157.0px;top:355.8px;font-size:13.8px;color:#000;transform:scaleX(1.074);">77</span>
<span class="t"  style="left:157.0px;top:376.8px;font-size:13.8px;color:#000;transform:scaleX(1.074);">29</span>
<span class="t"  style="left:157.0px;top:397.8px;font-size:13.8px;color:#000;transform:scaleX(1.074);">31</span>
<span class="t"  style="left:115.5px;top:430.5px;font-size:12px;color:#217346;transform:scaleX(1.016);font-weight:bold;">Sheet1</span>
<span class="t"  style="left:11.3px;top:455.8px;font-size:11px;color:#444444;transform:scaleX(0.975);">Ready</span>
<span class="t"  style="left:133.0px;top:455.8px;font-size:11px;color:#444444;transform:scaleX(0.991);">Average: 53.5</span>
<span class="t"  style="left:259.4px;top:455.8px;font-size:11px;color:#444444;transform:scaleX(1.046);">Count: 14</span>
<span class="t"  style="left:325.3px;top:455.8px;font-size:11px;color:#444444;transform:scaleX(0.960);">Sum: 321</span>
<span class="t"  style="left:654.0px;top:455.8px;font-size:11px;color:#444444;transform:scaleX(0.995);">100%</span>
  <!-- arrow to Data -->
  <svg style="left:0;top:0" width="703" height="485" viewBox="0 0 703 485">
    <path d="M380 46 L396 41 L415 36.8 L417 41 L451 41 L451 51 L418 51.2 L415 57 L402 52.6 Z" fill="#000"/>
    <!-- arrow to Sort -->
    <path d="M284 100.2 L300 95.6 L321 90 L322.4 94.4 L356 94.4 L356 105.2 L322.4 105.2 L321 109.8 L300 104.6 Z" fill="#000"/>
  </svg>


  </div>
</div>
<!-- outside shadow + editor handles -->
<div class="a" style="left:0;top:478px;width:703px;height:7px;background:linear-gradient(#dcdcdc,#f6f6f6)"></div>
<div class="a" style="left:0;top:0;width:703px;height:2px;background:#f8f8f8"></div>
<div class="a" style="left:350px;top:478px;width:5px;height:5px;box-sizing:border-box;border:1px solid #333;background:#fff"></div>
<div class="a" style="left:702px;top:238px;width:1px;height:5px;background:#333"></div>
<div class="a" style="left:702px;top:478px;width:1px;height:4px;background:#333"></div>
<!-- frame -->
<div class="a" style="left:2px;top:2px;width:699px;height:476px;box-sizing:border-box;border:1px solid #217346;border-radius:9px;pointer-events:none"></div>
</body>
</html>
